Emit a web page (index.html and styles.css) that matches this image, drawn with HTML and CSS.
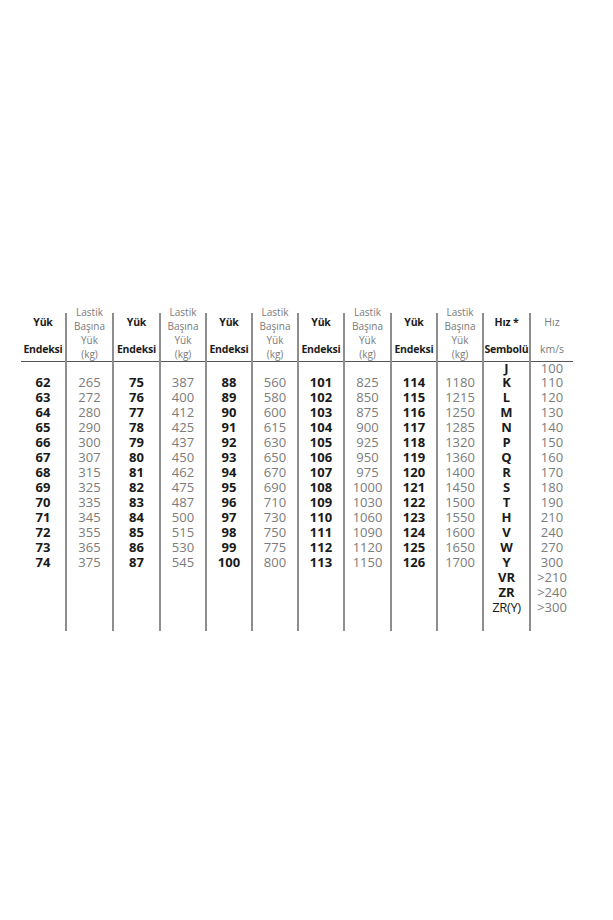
FILE: index.html
```html
<!DOCTYPE html>
<html lang="tr">
<head>
<meta charset="utf-8">
<title>Yük Endeksi ve Hız Sembolü</title>
<link rel="stylesheet" href="styles.css">
</head>
<body>
<div class="page">
<table class="load">
<colgroup>
<col class="c1"><col class="c2"><col class="c3"><col class="c4"><col class="c5"><col class="c6"><col class="c7"><col class="c8"><col class="c9"><col class="c10"><col class="c11"><col class="c12">
</colgroup>
<thead>
<tr>
<th class="hb"><div class="two">Yük<br>Endeksi</div></th>
<th class="hl"><div class="four">Lastik<br>Başına<br>Yük<br>(kg)</div></th>
<th class="hb"><div class="two">Yük<br>Endeksi</div></th>
<th class="hl"><div class="four">Lastik<br>Başına<br>Yük<br>(kg)</div></th>
<th class="hb"><div class="two">Yük<br>Endeksi</div></th>
<th class="hl"><div class="four">Lastik<br>Başına<br>Yük<br>(kg)</div></th>
<th class="hb"><div class="two">Yük<br>Endeksi</div></th>
<th class="hl"><div class="four">Lastik<br>Başına<br>Yük<br>(kg)</div></th>
<th class="hb"><div class="two">Yük<br>Endeksi</div></th>
<th class="hl"><div class="four">Lastik<br>Başına<br>Yük<br>(kg)</div></th>
<th class="hb"><div class="two">Hız *<br>Sembolü</div></th>
<th class="hl hs last"><div class="two">Hız<br>km/s</div></th>
</tr>
</thead>
<tbody>
<tr class="first"><td></td><td></td><td></td><td></td><td></td><td></td><td></td><td></td><td></td><td></td><td class="b">J</td><td class="l last">100</td></tr>
<tr><td class="b">62</td><td class="l">265</td><td class="b">75</td><td class="l">387</td><td class="b">88</td><td class="l">560</td><td class="b">101</td><td class="l">825</td><td class="b">114</td><td class="l">1180</td><td class="b">K</td><td class="l last">110</td></tr>
<tr><td class="b">63</td><td class="l">272</td><td class="b">76</td><td class="l">400</td><td class="b">89</td><td class="l">580</td><td class="b">102</td><td class="l">850</td><td class="b">115</td><td class="l">1215</td><td class="b">L</td><td class="l last">120</td></tr>
<tr><td class="b">64</td><td class="l">280</td><td class="b">77</td><td class="l">412</td><td class="b">90</td><td class="l">600</td><td class="b">103</td><td class="l">875</td><td class="b">116</td><td class="l">1250</td><td class="b">M</td><td class="l last">130</td></tr>
<tr><td class="b">65</td><td class="l">290</td><td class="b">78</td><td class="l">425</td><td class="b">91</td><td class="l">615</td><td class="b">104</td><td class="l">900</td><td class="b">117</td><td class="l">1285</td><td class="b">N</td><td class="l last">140</td></tr>
<tr><td class="b">66</td><td class="l">300</td><td class="b">79</td><td class="l">437</td><td class="b">92</td><td class="l">630</td><td class="b">105</td><td class="l">925</td><td class="b">118</td><td class="l">1320</td><td class="b">P</td><td class="l last">150</td></tr>
<tr><td class="b">67</td><td class="l">307</td><td class="b">80</td><td class="l">450</td><td class="b">93</td><td class="l">650</td><td class="b">106</td><td class="l">950</td><td class="b">119</td><td class="l">1360</td><td class="b">Q</td><td class="l last">160</td></tr>
<tr><td class="b">68</td><td class="l">315</td><td class="b">81</td><td class="l">462</td><td class="b">94</td><td class="l">670</td><td class="b">107</td><td class="l">975</td><td class="b">120</td><td class="l">1400</td><td class="b">R</td><td class="l last">170</td></tr>
<tr><td class="b">69</td><td class="l">325</td><td class="b">82</td><td class="l">475</td><td class="b">95</td><td class="l">690</td><td class="b">108</td><td class="l">1000</td><td class="b">121</td><td class="l">1450</td><td class="b">S</td><td class="l last">180</td></tr>
<tr><td class="b">70</td><td class="l">335</td><td class="b">83</td><td class="l">487</td><td class="b">96</td><td class="l">710</td><td class="b">109</td><td class="l">1030</td><td class="b">122</td><td class="l">1500</td><td class="b">T</td><td class="l last">190</td></tr>
<tr><td class="b">71</td><td class="l">345</td><td class="b">84</td><td class="l">500</td><td class="b">97</td><td class="l">730</td><td class="b">110</td><td class="l">1060</td><td class="b">123</td><td class="l">1550</td><td class="b">H</td><td class="l last">210</td></tr>
<tr><td class="b">72</td><td class="l">355</td><td class="b">85</td><td class="l">515</td><td class="b">98</td><td class="l">750</td><td class="b">111</td><td class="l">1090</td><td class="b">124</td><td class="l">1600</td><td class="b">V</td><td class="l last">240</td></tr>
<tr><td class="b">73</td><td class="l">365</td><td class="b">86</td><td class="l">530</td><td class="b">99</td><td class="l">775</td><td class="b">112</td><td class="l">1120</td><td class="b">125</td><td class="l">1650</td><td class="b">W</td><td class="l last">270</td></tr>
<tr><td class="b">74</td><td class="l">375</td><td class="b">87</td><td class="l">545</td><td class="b">100</td><td class="l">800</td><td class="b">113</td><td class="l">1150</td><td class="b">126</td><td class="l">1700</td><td class="b">Y</td><td class="l last">300</td></tr>
<tr><td></td><td></td><td></td><td></td><td></td><td></td><td></td><td></td><td></td><td></td><td class="b">VR</td><td class="l last">&gt;210</td></tr>
<tr><td></td><td></td><td></td><td></td><td></td><td></td><td></td><td></td><td></td><td></td><td class="b">ZR</td><td class="l last">&gt;240</td></tr>
<tr><td></td><td></td><td></td><td></td><td></td><td></td><td></td><td></td><td></td><td></td><td class="b zry">ZR(Y)</td><td class="l last">&gt;300</td></tr>
<tr class="spacer"><td></td><td></td><td></td><td></td><td></td><td></td><td></td><td></td><td></td><td></td><td></td><td class="last"></td></tr>
</tbody>
</table>
</div>
</body>
</html>
```

FILE: styles.css
```css
html, body {
  margin: 0;
  padding: 0;
  background: #ffffff;
}

.page {
  padding: 313px 0 0 21px;
  font-family: "Open Sans", "Liberation Sans", sans-serif;
}

.load {
  border-collapse: collapse;
  table-layout: fixed;
  width: 552px;
}

.c1 { width: 45px; }
.c2 { width: 47px; }
.c3 { width: 47px; }
.c4 { width: 46px; }
.c5 { width: 46px; }
.c6 { width: 46px; }
.c7 { width: 46px; }
.c8 { width: 47px; }
.c9 { width: 46px; }
.c10 { width: 46px; }
.c11 { width: 47px; }
.c12 { width: 43px; }

.load th,
.load td {
  padding: 0;
  text-align: center;
  border-right: 2px solid #8e8e8e;
  white-space: nowrap;
  overflow: visible;
}

.load th.last,
.load td.last {
  border-right: none;
}

.load thead th {
  height: 48px;
  vertical-align: middle;
  border-bottom: 1px solid #555555;
}

.load thead .two {
  line-height: 27px;
  height: 54px;
  margin: -4px 0 -2px;
}

.load thead .four {
  line-height: 14px;
  height: 56px;
  margin: -8px 0 0;
}

.hb {
  font-weight: 700;
  font-size: 10.5px;
  color: #1c1c1c;
  letter-spacing: -0.2px;
}

.hl {
  font-weight: 400;
  font-size: 10px;
  color: #7a7a7a;
}

.hs {
  font-size: 10.5px;
}

.load tbody td {
  height: 15px;
  line-height: 15px;
  font-size: 13px;
}

.load tbody tr.first td {
  height: 13px;
  line-height: 13px;
}

.load tbody tr.spacer td {
  height: 16px;
}

.b {
  font-weight: 700;
  color: #1a1a1a;
}

.l {
  font-weight: 400;
  color: #7c7c7c;
}

.zry {
  font-weight: 400;
  letter-spacing: -0.4px;
}
```
